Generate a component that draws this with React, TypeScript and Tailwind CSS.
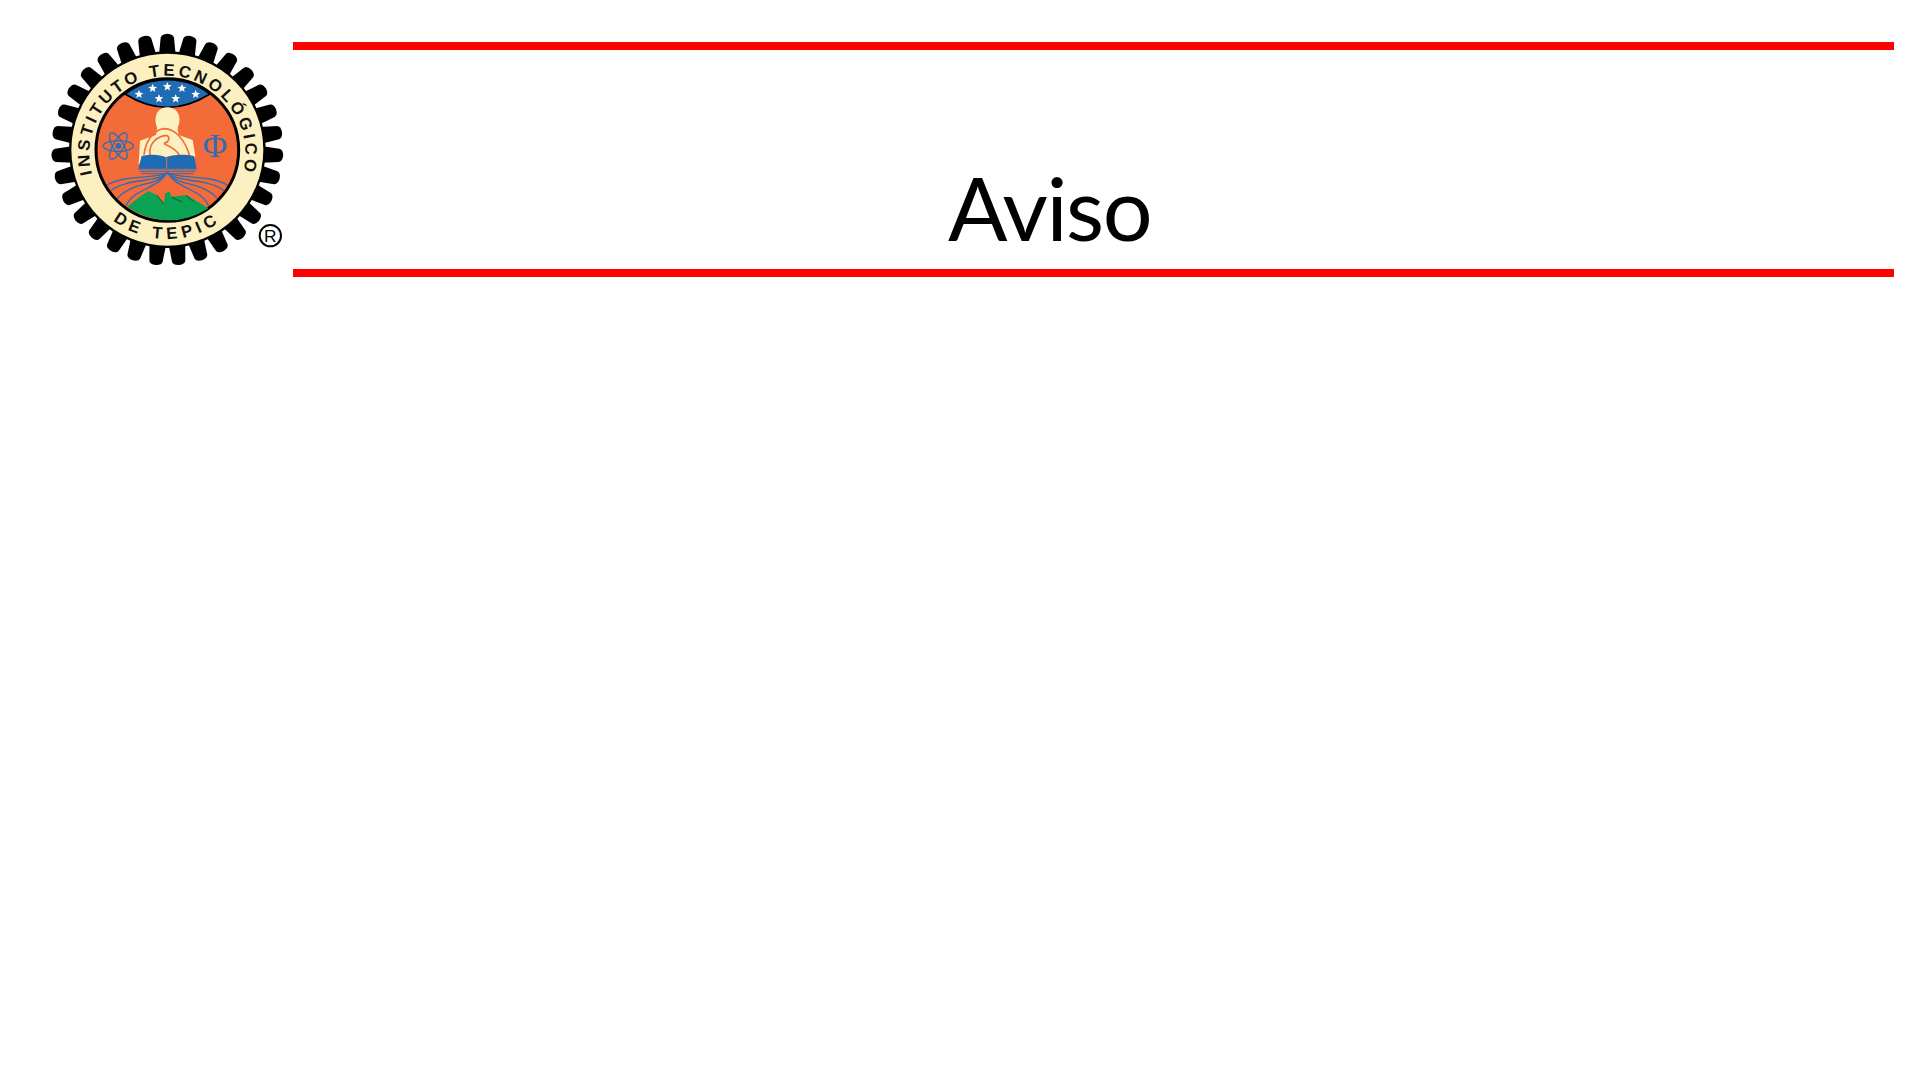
const teeth = Array.from({ length: 31 }, (_, i) => (i * 360) / 31);
const stars: [number, number][] = [
  [297, 223],
  [338, 205],
  [382, 200],
  [426, 205],
  [467, 223],
  [357, 236],
  [407, 236],
];
const blue = "#2f6db5";
const orange = "#f26b38";
const cream = "#fdf0c0";

function starPoints(cx: number, cy: number, r: number) {
  const pts: string[] = [];
  for (let i = 0; i < 10; i++) {
    const rad = i % 2 === 0 ? r : r * 0.42;
    const a = (Math.PI / 5) * i - Math.PI / 2;
    pts.push(`${cx + rad * Math.cos(a)},${cy + rad * Math.sin(a)}`);
  }
  return pts.join(" ");
}

// Coordinates are 3x page pixels, measured from the logo's top-left corner
function Logo() {
  return (
    <svg viewBox="0 0 759 780" className="block h-[260px] w-[253px] shrink-0">
      <defs>
        <path id="arc-top" d="M 156 462 A 234 234 0 1 1 608 462" />
        <path id="arc-bottom" d="M 130 480 A 268 268 0 0 0 634 480" />
      </defs>

      <g transform="translate(382 389)">
        {teeth.map((deg) => (
          <path
            key={deg}
            transform={`rotate(${deg})`}
            d="M-25 -285 L-20 -336 Q-18 -347 0 -348 Q18 -347 20 -336 L25 -285 Z"
            fill="#000"
          />
        ))}
      </g>
      <circle cx="382" cy="389" r="295" fill="#000" />
      <circle cx="382" cy="389" r="288" fill={cream} />

      <text
        fontFamily="'Liberation Sans', sans-serif"
        fontWeight="700"
        fontSize="50"
        fill="#111"
      >
        <textPath href="#arc-top" startOffset="50%" textAnchor="middle" letterSpacing="10">
          INSTITUTO TECNOLÓGICO
        </textPath>
      </text>
      <text
        fontFamily="'Liberation Sans', sans-serif"
        fontWeight="700"
        fontSize="50"
        fill="#111"
      >
        <textPath href="#arc-bottom" startOffset="50%" textAnchor="middle" letterSpacing="15">
          DE TEPIC
        </textPath>
      </text>

      <circle cx="382" cy="390" r="214" fill={orange} stroke="#000" strokeWidth="9" />

      <path d="M255 222 A210 210 0 0 1 510 222 Q382 302 255 222 Z" fill="#1f6cb5" stroke="#000" strokeWidth="5" />
      {stars.map(([x, y]) => (
        <polygon key={`${x}-${y}`} points={starPoints(x, y, 14)} fill="#fff" />
      ))}

      <g fill="none" stroke={blue} strokeWidth="4">
        <ellipse cx="235" cy="378" rx="45" ry="16" />
        <ellipse cx="235" cy="378" rx="45" ry="16" transform="rotate(60 235 378)" />
        <ellipse cx="235" cy="378" rx="45" ry="16" transform="rotate(120 235 378)" />
      </g>
      <circle cx="235" cy="378" r="9" fill={blue} />
      <text
        x="525"
        y="411"
        textAnchor="middle"
        fontFamily="'Liberation Serif', serif"
        fontSize="100"
        fill={blue}
      >
        Φ
      </text>

      <path d="M352 326 C338 290 352 262 382 262 C412 262 428 290 412 326 Z" fill={cream} />
      <path d="M352 322 L412 322 L416 345 L458 360 L466 410 L296 432 L300 362 L348 345 Z" fill={cream} />
      <path
        d="M312 405 C316 365 340 330 372 326 C405 326 436 358 450 412 M330 405 C326 372 348 350 378 346 C394 350 386 368 372 370 M372 370 C384 380 402 380 418 405"
        fill="none"
        stroke={orange}
        strokeWidth="5"
      />
      <path d="M305 408 C330 402 360 402 378 412 C396 402 436 402 462 408 L470 446 L295 446 Z" fill="#1f6cb5" />
      <path d="M380 410 L380 448" stroke={orange} strokeWidth="3" />
      <path d="M294 447 H470 M298 454 H466 M304 461 H460" stroke={blue} strokeWidth="3" fill="none" />

      <path
        d="M258 558 C280 505 350 510 382 458 C414 510 484 505 506 558"
        fill="none"
        stroke={blue}
        strokeWidth="4"
      />
      <path
        d="M232 535 C275 485 350 500 382 458 C414 500 490 485 532 535 M212 512 C265 472 350 490 382 458 C414 490 500 472 552 512 M200 495 C260 462 350 478 382 458 C414 478 505 462 562 495"
        fill="none"
        stroke={blue}
        strokeWidth="4"
      />

      <path
        d="M262 560 Q295 532 325 513 L350 525 L372 550 L376 520 L388 515 L395 530 L440 525 L505 565 A212 212 0 0 1 262 560 Z"
        fill="#0aa354"
      />
      <path d="M350 525 L372 552 M395 532 L425 545 M440 527 L460 545" stroke="#0b5a33" strokeWidth="3" fill="none" />

      <circle cx="691" cy="647" r="32" fill="#fff" stroke="#000" strokeWidth="6" />
      <text
        x="691"
        y="666"
        textAnchor="middle"
        fontFamily="'Liberation Sans', sans-serif"
        fontSize="52"
        fill="#000"
      >
        R
      </text>
    </svg>
  );
}

export default function App() {
  return (
    <div className="flex h-[1079px] w-full items-start bg-white pt-5 pl-10">
      <Logo />
      <div className="mt-[22px] flex h-[235px] w-[1601px] items-end justify-center border-y-8 border-[#ff0000] pr-[88px]">
        <h1 className="font-['Lato',sans-serif] text-[88px] leading-none font-normal tracking-[-1.5px] text-black mb-[18px]">
          Aviso
        </h1>
      </div>
    </div>
  );
}
